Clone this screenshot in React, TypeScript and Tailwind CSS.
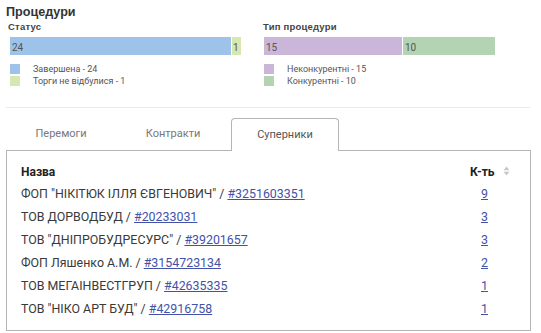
import React from "react";

const rows = [
  { name: 'ФОП "НІКІТЮК ІЛЛЯ ЄВГЕНОВИЧ"', code: "#3251603351", n: 9 },
  { name: "ТОВ ДОРВОДБУД", code: "#20233031", n: 3 },
  { name: 'ТОВ "ДНІПРОБУДРЕСУРС"', code: "#39201657", n: 3 },
  { name: "ФОП Ляшенко А.М.", code: "#3154723134", n: 2 },
  { name: "ТОВ МЕГАІНВЕСТГРУП", code: "#42635335", n: 1 },
  { name: 'ТОВ "НІКО АРТ БУД"', code: "#42916758", n: 1 },
];

export default function App() {
  return (
    <div
      className="w-[541px] h-[333px] overflow-hidden bg-white text-[#333]"
      style={{ fontFamily: "Roboto, 'Liberation Sans', sans-serif" }}
    >
      <div className="pl-[6px] pt-[4px]">
        <div className="text-[12.6px] font-bold leading-[16px] text-[#333]" style={{ fontFamily: "'Liberation Sans', Arial, sans-serif" }}>
          Процедури
        </div>
        <div className="flex">
          {/* Status */}
          <div className="w-[257px] pl-[2px]">
            <div className="text-[9.5px] font-bold leading-[12px] tracking-[0.2px] text-[#444] mt-[1px]" style={{ fontFamily: "'Liberation Sans', Arial, sans-serif" }}>
              Статус
            </div>
            <div className="flex ml-[2px] mt-[4px] w-[231px] h-[18px]">
              <div className="w-[222px] h-full bg-[#9dc3ea] border-r border-white text-[10px] leading-[22px] pl-[2px] text-[#555]">24</div>
              <div className="flex-1 h-full bg-[#d7e7b0] text-[10px] leading-[22px] pl-[1px] text-[#555]">1</div>
            </div>
            <div className="ml-[2px] mt-[9px] flex flex-col gap-[2px] text-[9px] leading-[10px] text-[#555]">
              <div className="flex items-center"><span className="w-[10px] h-[10px] bg-[#9dc3ea] mr-[13px]" />Завершена - 24</div>
              <div className="flex items-center"><span className="w-[10px] h-[10px] bg-[#d7e7b0] mr-[13px]" />Торги не відбулися - 1</div>
            </div>
          </div>
          {/* Type */}
          <div className="w-[260px]">
            <div className="text-[9.5px] font-bold leading-[12px] tracking-[0.2px] text-[#444] mt-[1px]" style={{ fontFamily: "'Liberation Sans', Arial, sans-serif" }}>
              Тип процедури
            </div>
            <div className="flex ml-[1px] mt-[4px] w-[231px] h-[18px]">
              <div className="w-[139px] h-full bg-[#c9b6d9] border-r border-white text-[10px] leading-[22px] pl-[2px] text-[#555]">15</div>
              <div className="flex-1 h-full bg-[#b4d3b3] text-[10px] leading-[22px] pl-[2px] text-[#555]">10</div>
            </div>
            <div className="ml-[1px] mt-[9px] flex flex-col gap-[2px] text-[9px] leading-[10px] text-[#555]">
              <div className="flex items-center"><span className="w-[10px] h-[10px] bg-[#c9b6d9] mr-[13px]" />Неконкурентні - 15</div>
              <div className="flex items-center"><span className="w-[10px] h-[10px] bg-[#b4d3b3] mr-[13px]" />Конкурентні - 10</div>
            </div>
          </div>
        </div>
      </div>

      <div className="ml-[6px] w-[524px] h-px bg-[#eaeaea] mt-[21px]" />

      <div className="ml-[6px] w-[525px] mt-[10px]">
        <div className="flex gap-[4px] pl-[1px] h-[32px] relative z-10">
          <div className="w-[108px] flex items-center justify-center text-[11px] text-[#777]">Перемоги</div>
          <div className="w-[108px] flex items-center justify-center text-[11px] text-[#777]">Контракти</div>
          <div className="w-[108px] h-[33px] flex items-center justify-center text-[11px] text-[#555] border border-b-0 border-[#b5b5b5] rounded-t-[4px] bg-white">
            Суперники
          </div>
        </div>
        <div className="border border-[#b5b5b5] h-[181px] px-[14px] pt-[13px]">
          <div className="flex items-center h-[16px]">
            <div className="flex-1 text-[12px] font-bold text-[#222]">Назва</div>
            <div className="w-[46px] relative text-[12px] font-bold text-[#222]">
              К-ть
              <svg className="absolute left-[33px] top-[3px]" width="7" height="10" viewBox="0 0 7 10">
                <path d="M3.5 0.5 L6.5 4.3 H0.5 Z" fill="#c8c8c8" />
                <path d="M3.5 9.5 L6.5 5.7 H0.5 Z" fill="#c8c8c8" />
              </svg>
            </div>
          </div>
          <div className="mt-[3px] flex flex-col">
            {rows.map((r) => (
              <div key={r.code} className="flex items-center h-[23px] text-[12.4px]">
                <div className="flex-1 text-[#3a3a3a]">
                  {r.name} / <a className="text-[#4352a8] underline" href="#">{r.code}</a>
                </div>
                <div className="w-[46px] pl-[11px] text-[#4352a8] underline">{r.n}</div>
              </div>
            ))}
          </div>
        </div>
      </div>
    </div>
  );
}
